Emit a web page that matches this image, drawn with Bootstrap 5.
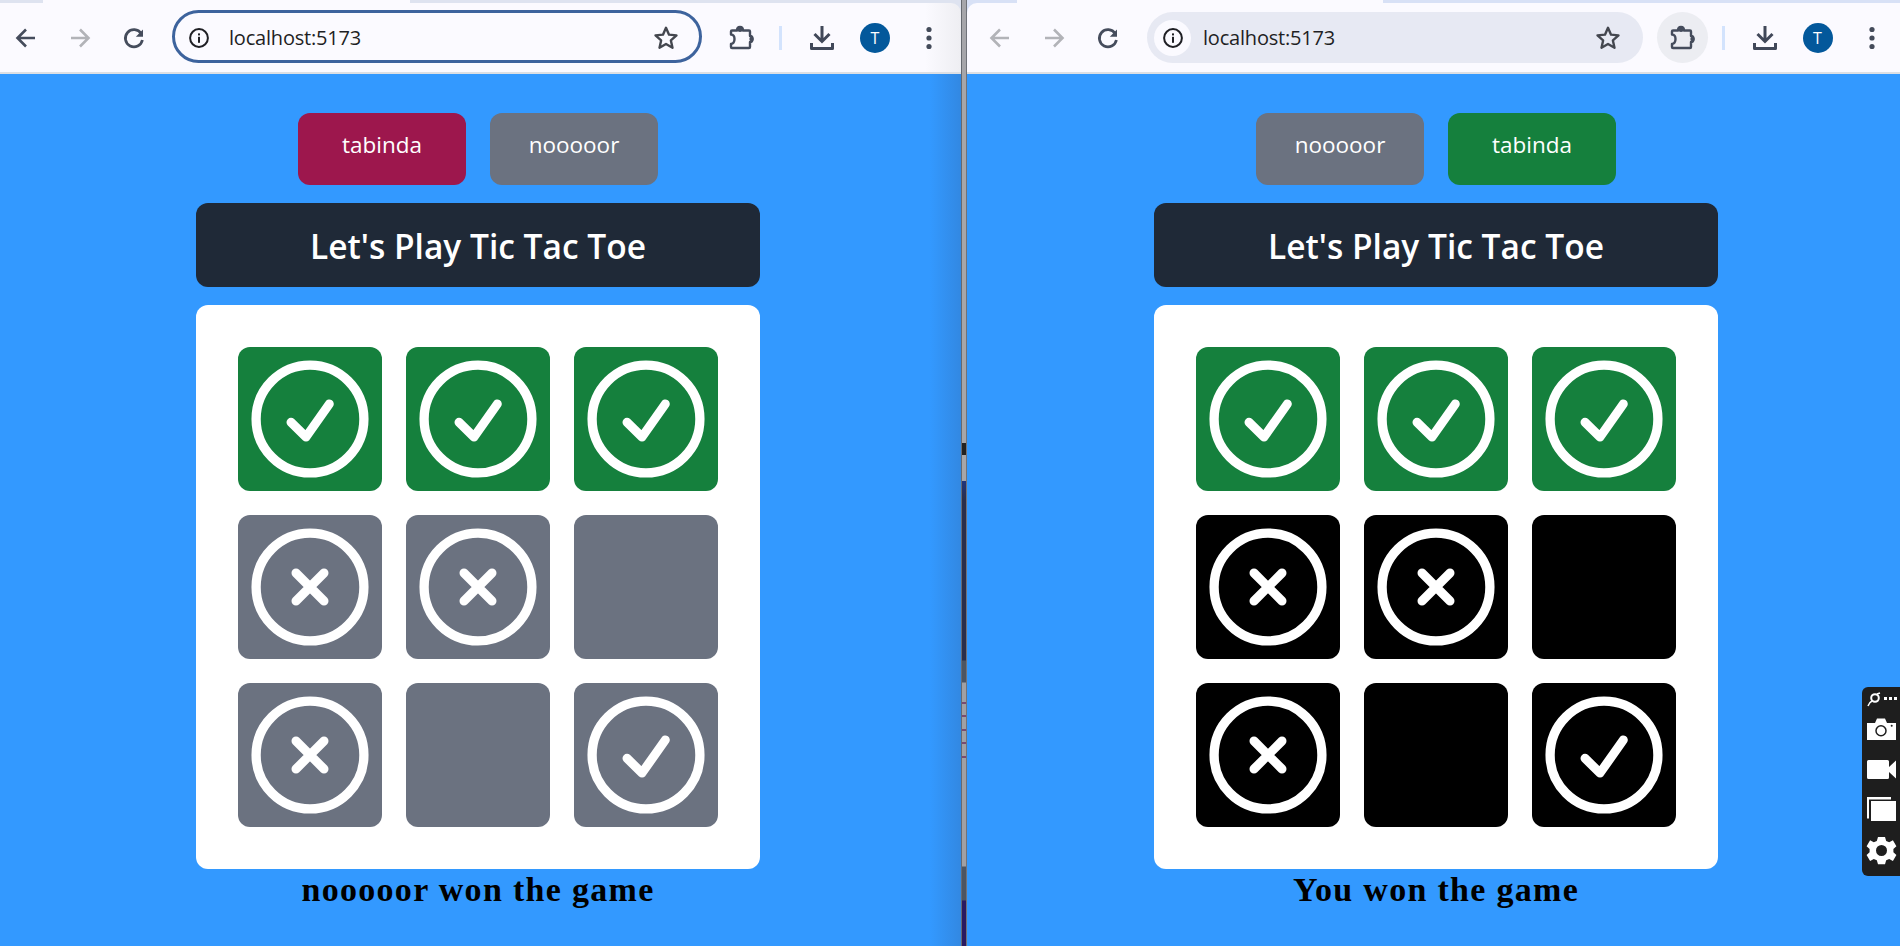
<!DOCTYPE html>
<html>
<head>
<title>Tic Tac Toe</title>
<link href="https://cdn.jsdelivr.net/npm/bootstrap@5.3.0/dist/css/bootstrap.min.css" rel="stylesheet">
<style>
html, body { height: 946px; overflow: hidden; background: #3399ff; }
.pane { height: 946px; flex: none; }
.pane-a { width: 961px; background: linear-gradient(to right, #3399ff 930px, #3288e2 961px); }
.pane-b { width: 933px; background: #3399ff; }
.split { width: 6px; flex: none; border-left: 1.5px solid #666a70; border-right: 1.5px solid #70737a;
  background:
    repeating-linear-gradient(to bottom, transparent 0, transparent 11.6px, #7a4a70 11.6px, #7a4a70 13.6px) 0 690px / 100% 68px no-repeat,
    linear-gradient(to bottom, #a6a6aa 0, #a6a6aa 443px, #222 443px, #222 455px, #a6a6aa 455px, #a6a6aa 481px, #1f3580 481px, #2a2e4a 500px, #2a2e4a 660px, #4c5563 661px, #4c5563 682px, #a0a0a4 683px, #a0a0a4 866px, #4c5563 867px, #4c5563 900px, #2a1a60 901px, #2a1a60 946px); }
.chrome-a { background: #dee3f0; }
.chrome-b { background: #d8e1f6; }
.strip { height: 3px; }
.chrome-a .strip-tab { margin-left: 43px; width: 367px; }
.chrome-b .strip-tab { margin-left: 50px; width: 366px; }
.strip-tab { background: #fbfaff; height: 3px; }
.bar { height: 69px; padding-top: 1px; background: #fbfaff; }
.chrome-a .bar { padding-left: 8px; padding-right: 22px; border-top-right-radius: 10px; background: linear-gradient(to right, #fbfaff 925px, #eeeef2 961px); }
.chrome-b .bar { padding-left: 15px; padding-right: 18.5px; border-top-left-radius: 10px; }
.bar-line { height: 2px; background: #dcdfe4; }
.tool { width: 36px; height: 36px; flex: none; }
.tool-step { margin-left: 18px; }
.tint-on { color: #454c5c; }
.tint-off { color: #b2b3b8; }
.omni { flex: 1 1 0; min-width: 0; }
.omni-a { height: 53px; margin-left: 20px; margin-bottom: 3px; padding: 3px 20px 0 12px; background: #fbfaff; border: 3px solid #3d639d; border-radius: 27px; }
.omni-b { height: 51px; margin-left: 21px; margin-bottom: 1px; padding: 1px 22px 0 7px; background: #e7e9f3; border-radius: 26px; }
.chip-info { width: 24px; height: 24px; flex: none; }
.omni-b .chip-info { width: 37px; height: 36px; background: #fbfaff; border-radius: 50%; }
.url { font-family: "Open Sans", "Noto Sans", sans-serif; font-size: 20px; color: #1f1f24; letter-spacing: -0.2px; line-height: 24px; }
.omni-a .url { margin-left: 18px; }
.omni-b .url { margin-left: 12px; }
.chip-ext { width: 51px; height: 51px; border-radius: 50%; flex: none; margin-bottom: 1px; }
.chrome-a .chip-ext { margin-left: 15px; }
.chrome-b .chip-ext { margin-left: 14px; background: #ecedf2; }
.bar-sep { width: 3px; height: 24px; margin-left: 13.5px; background: #d3e3fd; flex: none; }
.chrome-a .bar-sep { margin-left: 11.5px; }
.tool-dl { margin-left: 22px; }
.avatar-dot { width: 30px; height: 30px; margin-left: 20px; flex: none; background: #03589b; color: #fff; border-radius: 50%; font-family: "Open Sans", sans-serif; font-size: 16px; line-height: 30px; }
.tool-menu { width: 20px; height: 36px; margin-left: 29px; flex: none; }
.game { padding-top: 39px; }
.pane-a .game { padding-right: 5px; }
.pane-b .game { padding-left: 5px; }
.game-col { width: 564px; }
.player { width: 168px; height: 72px; border-radius: 12px; padding-bottom: 9px; font-family: "Open Sans", "Noto Sans", sans-serif; font-size: 22.5px; color: #fff; }
.tone-pink { background: #9d174d; }
.tone-gray { background: #6b7280; }
.tone-green { background: #15803d; }
.tone-black { background: #000; }
.headline { height: 84px; margin-top: 18px; padding-top: 3px; border-radius: 12px; background: #1f2937; color: #fff; font-family: "Open Sans", "Noto Sans", sans-serif; font-size: 33.5px; font-weight: 600; }
.board { margin-top: 18px; padding: 42px; background: #fff; border-radius: 12px; display: grid; grid-template-columns: repeat(3, 144px); gap: 24px; }
.square { width: 144px; height: 144px; border-radius: 12px; }
.square svg { display: block; }
.verdict { font-family: "Liberation Serif", serif; font-weight: 700; font-size: 34px; letter-spacing: 1.3px; line-height: 40px; color: #000; margin-top: 1px; }
.snap-dock { position: fixed; right: 0; top: 687px; width: 38px; height: 189px; background: #1e1e1e; border-radius: 6px 0 0 6px; }
.snap-dock svg { display: block; }
</style>
</head>
<body>
<svg width="0" height="0" class="position-absolute">
  <defs>
    <symbol id="ico-back" viewBox="0 0 36 36"><path d="M27 18H10M18 9.5 9.5 18l8.5 8.5" fill="none" stroke="currentColor" stroke-width="2.6"/></symbol>
    <symbol id="ico-forward" viewBox="0 0 36 36"><path d="M9 18h17M18 9.5l8.5 8.5-8.5 8.5" fill="none" stroke="currentColor" stroke-width="2.6"/></symbol>
    <symbol id="ico-reload" viewBox="0 0 36 36"><path d="M25.2 13.6A8.6 8.6 0 1 0 26.4 20" fill="none" stroke="currentColor" stroke-width="2.7"/><path d="M27 9.5v7.2h-7.2z" fill="currentColor"/></symbol>
    <symbol id="ico-info" viewBox="0 0 24 24"><circle cx="12" cy="12" r="8.9" fill="none" stroke="#1f1f24" stroke-width="2"/><rect x="11" y="10.8" width="2" height="6" fill="#1f1f24"/><rect x="11" y="7.4" width="2" height="2" fill="#1f1f24"/></symbol>
    <symbol id="ico-star" viewBox="0 0 24 24"><path d="m12 2.6 2.8 6.3 6.9.7-5.2 4.6 1.5 6.8-6-3.5-6 3.5 1.5-6.8-5.2-4.6 6.9-.7z" fill="none" stroke="#44474f" stroke-width="2.2" stroke-linejoin="round"/></symbol>
    <symbol id="ico-puzzle" viewBox="0 0 36 36">
      <path d="M8 10.5h5q0-3.5 3-3.5t3 3.5h6a1 1 0 0 1 1 1V16q2.500 0 2.500 3t-2.500 3v5a1 1 0 0 1-1 1H8a1 1 0 0 1-1-1v-3q3.500-.5 3.500-5t-3.500-4.500v-3a1 1 0 0 1 1-1z" fill="none" stroke="#454c5c" stroke-width="2.4" stroke-linejoin="round"/>
      <circle cx="16" cy="9.500" r="2.500" fill="#454c5c"/><circle cx="27.500" cy="19" r="2.200" fill="#454c5c"/>
    </symbol>
    <symbol id="ico-download" viewBox="0 0 36 36"><path d="M18 6v15M10.500 14l7.500 7.500 7.500-7.500" fill="none" stroke="#414859" stroke-width="3"/><path d="M7.500 23v5.500h21V23" fill="none" stroke="#414859" stroke-width="3" stroke-linejoin="round"/></symbol>
    <symbol id="ico-menu" viewBox="0 0 20 36"><circle cx="10" cy="9.500" r="2.600" fill="#444b5a"/><circle cx="10" cy="18" r="2.600" fill="#444b5a"/><circle cx="10" cy="26.500" r="2.600" fill="#444b5a"/></symbol>
    <symbol id="ico-yes" viewBox="0 0 144 144"><circle cx="72" cy="72" r="53.9" fill="none" stroke="#fff" stroke-width="9.3"/><path d="M53 75.300 68 90 91.300 57" fill="none" stroke="#fff" stroke-width="9" stroke-linecap="round" stroke-linejoin="round"/></symbol>
    <symbol id="ico-no" viewBox="0 0 144 144"><circle cx="72" cy="72" r="53.9" fill="none" stroke="#fff" stroke-width="9.3"/><path d="M58 58 86 86M86 58 58 86" fill="none" stroke="#fff" stroke-width="9" stroke-linecap="round"/></symbol>
  </defs>
</svg>

<div class="d-flex">
  <!-- left window -->
  <div class="pane pane-a">
    <div class="chrome-a">
      <div class="strip d-flex"><div class="strip-tab"></div></div>
      <div class="bar d-flex align-items-center">
        <svg class="tool tint-on"><use href="#ico-back"/></svg>
        <svg class="tool tool-step tint-off"><use href="#ico-forward"/></svg>
        <svg class="tool tool-step tint-on"><use href="#ico-reload"/></svg>
        <div class="omni omni-a d-flex align-items-center">
          <svg class="chip-info"><use href="#ico-info"/></svg>
          <span class="url">localhost:5173</span>
          <svg class="ms-auto" width="26" height="26"><use href="#ico-star"/></svg>
        </div>
        <div class="chip-ext d-flex align-items-center justify-content-center"><svg class="tool"><use href="#ico-puzzle"/></svg></div>
        <div class="bar-sep"></div>
        <svg class="tool tool-dl"><use href="#ico-download"/></svg>
        <div class="avatar-dot text-center">T</div>
        <svg class="tool-menu"><use href="#ico-menu"/></svg>
      </div>
    </div>
    <div class="bar-line"></div>
    <div class="game d-flex justify-content-center">
      <div class="game-col">
        <div class="d-flex justify-content-center gap-4">
          <div class="player tone-pink d-flex align-items-center justify-content-center">tabinda</div>
          <div class="player tone-gray d-flex align-items-center justify-content-center">nooooor</div>
        </div>
        <div class="headline d-flex align-items-center justify-content-center">Let's Play Tic Tac Toe</div>
        <div class="board">
          <div class="square tone-green"><svg width="144" height="144"><use href="#ico-yes"/></svg></div>
          <div class="square tone-green"><svg width="144" height="144"><use href="#ico-yes"/></svg></div>
          <div class="square tone-green"><svg width="144" height="144"><use href="#ico-yes"/></svg></div>
          <div class="square tone-gray"><svg width="144" height="144"><use href="#ico-no"/></svg></div>
          <div class="square tone-gray"><svg width="144" height="144"><use href="#ico-no"/></svg></div>
          <div class="square tone-gray"></div>
          <div class="square tone-gray"><svg width="144" height="144"><use href="#ico-no"/></svg></div>
          <div class="square tone-gray"></div>
          <div class="square tone-gray"><svg width="144" height="144"><use href="#ico-yes"/></svg></div>
        </div>
        <div class="verdict text-center">nooooor won the game</div>
      </div>
    </div>
  </div>

  <div class="split"></div>

  <!-- right window -->
  <div class="pane pane-b">
    <div class="chrome-b">
      <div class="strip d-flex"><div class="strip-tab"></div></div>
      <div class="bar d-flex align-items-center">
        <svg class="tool tint-off"><use href="#ico-back"/></svg>
        <svg class="tool tool-step tint-off"><use href="#ico-forward"/></svg>
        <svg class="tool tool-step tint-on"><use href="#ico-reload"/></svg>
        <div class="omni omni-b d-flex align-items-center">
          <div class="chip-info d-flex align-items-center justify-content-center"><svg width="24" height="24"><use href="#ico-info"/></svg></div>
          <span class="url">localhost:5173</span>
          <svg class="ms-auto" width="26" height="26"><use href="#ico-star"/></svg>
        </div>
        <div class="chip-ext d-flex align-items-center justify-content-center"><svg class="tool"><use href="#ico-puzzle"/></svg></div>
        <div class="bar-sep"></div>
        <svg class="tool tool-dl"><use href="#ico-download"/></svg>
        <div class="avatar-dot text-center">T</div>
        <svg class="tool-menu"><use href="#ico-menu"/></svg>
      </div>
    </div>
    <div class="bar-line"></div>
    <div class="game d-flex justify-content-center">
      <div class="game-col">
        <div class="d-flex justify-content-center gap-4">
          <div class="player tone-gray d-flex align-items-center justify-content-center">nooooor</div>
          <div class="player tone-green d-flex align-items-center justify-content-center">tabinda</div>
        </div>
        <div class="headline d-flex align-items-center justify-content-center">Let's Play Tic Tac Toe</div>
        <div class="board">
          <div class="square tone-green"><svg width="144" height="144"><use href="#ico-yes"/></svg></div>
          <div class="square tone-green"><svg width="144" height="144"><use href="#ico-yes"/></svg></div>
          <div class="square tone-green"><svg width="144" height="144"><use href="#ico-yes"/></svg></div>
          <div class="square tone-black"><svg width="144" height="144"><use href="#ico-no"/></svg></div>
          <div class="square tone-black"><svg width="144" height="144"><use href="#ico-no"/></svg></div>
          <div class="square tone-black"></div>
          <div class="square tone-black"><svg width="144" height="144"><use href="#ico-no"/></svg></div>
          <div class="square tone-black"></div>
          <div class="square tone-black"><svg width="144" height="144"><use href="#ico-yes"/></svg></div>
        </div>
        <div class="verdict text-center">You won the game</div>
      </div>
    </div>
  </div>
</div>

<!-- screenshot extension dock, floats over the page -->
<div class="snap-dock">
  <svg width="38" height="189" viewBox="0 0 38 189">
    <circle cx="13" cy="11" r="3.8" fill="none" stroke="#fff" stroke-width="2"/>
    <path d="M6 19c1-3 2-4 4-5M15 7l3-1" stroke="#fff" stroke-width="1.5" fill="none"/>
    <rect x="22" y="10" width="3" height="3" fill="#fff"/><rect x="27" y="10" width="3" height="3" fill="#fff"/><rect x="32" y="10" width="3" height="3" fill="#fff"/>
    <path d="M5 36h8l2-4.500h8l2 4.500h9v17H5z" fill="#fff"/>
    <circle cx="19" cy="43.700" r="5" fill="none" stroke="#1e1e1e" stroke-width="1.5"/>
    <circle cx="29.700" cy="38.700" r="1" fill="#1e1e1e"/>
    <path d="M5 74.500a1.500 1.500 0 0 1 1.500-1.500H25.500a1.500 1.500 0 0 1 1.500 1.500V80l7-6.500V91.500L27 85v5.500a1.500 1.500 0 0 1-1.500 1.500H6.500A1.500 1.500 0 0 1 5 90.500z" fill="#fff"/>
    <path d="M5 110h24v2.500H7v19H5z" fill="#fff"/>
    <rect x="9" y="114" width="25" height="20" fill="#fff"/>
    <g transform="translate(0 12)">
      <path fill-rule="evenodd" d="M16 138h7l1.200 4 3 1.300 3.700-2 3.500 6-3 2.700v3.200l3 2.700-3.500 6-3.700-2-3 1.300-1.200 4h-7l-1.200-4-3-1.300-3.700 2-3.500-6 3-2.700v-3.200l-3-2.700 3.500-6 3.700 2 3-1.300zM19.500 146a5.500 5.500 0 1 0 0 11 5.500 5.500 0 0 0 0-11z" fill="#fff"/>
    </g>
  </svg>
</div>
</body>
</html>
